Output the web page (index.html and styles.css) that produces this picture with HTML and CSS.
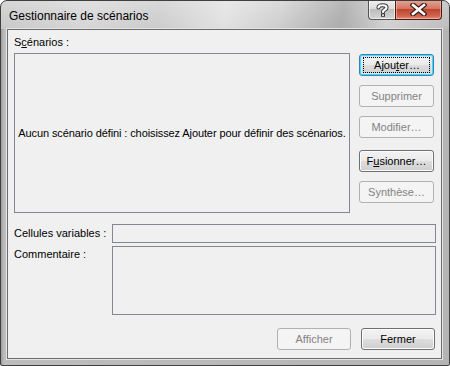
FILE: index.html
```html
<!DOCTYPE html>
<html lang="fr">
<head>
<meta charset="utf-8">
<title>Gestionnaire de scénarios</title>
<link rel="stylesheet" href="styles.css">
</head>
<body>
<div class="window">
  <div class="titlebar">
    <span class="title">Gestionnaire de scénarios</span>
    <div class="caption-btns">
      <div class="cb help">
        <svg width="13" height="14" viewBox="0 0 13 14">
          <path d="M2.5 4.5 C2.5 1.5 10.5 1.5 10.5 4.5 C10.5 7 7 6.5 7 9" fill="none" stroke="#3a3a3a" stroke-width="4.2" stroke-linecap="round"/>
          <rect x="5" y="10.4" width="4" height="3.4" fill="#3a3a3a"/>
          <path d="M2.5 4.5 C2.5 1.5 10.5 1.5 10.5 4.5 C10.5 7 7 6.5 7 9" fill="none" stroke="#ffffff" stroke-width="2.2" stroke-linecap="round"/>
          <rect x="6" y="11.4" width="2" height="1.4" fill="#ffffff"/>
        </svg>
      </div>
      <div class="cb close">
        <svg width="17" height="13" viewBox="0 0 17 13">
          <path d="M3 2 L14 11 M14 2 L3 11" fill="none" stroke="#3a1f1a" stroke-width="5" stroke-linecap="square"/>
          <path d="M3 2 L14 11 M14 2 L3 11" fill="none" stroke="#ffffff" stroke-width="2.6" stroke-linecap="square"/>
        </svg>
      </div>
    </div>
  </div>
  <div class="client">
    <div class="group-label">S<u>c</u>énarios :</div>
    <div class="top-row">
      <div class="listbox">Aucun scénario défini : choisissez Ajouter pour définir des scénarios.</div>
      <div class="btn-col">
        <div class="btn default"><span class="focus">Ajou<u>t</u>er…</span></div>
        <div class="btn disabled">Supprimer</div>
        <div class="btn disabled">Modifier…</div>
        <div class="btn gap">F<u>u</u>sionner…</div>
        <div class="btn disabled">Synthèse…</div>
      </div>
    </div>
    <div class="field-row">
      <div class="field-label">Cellules variables :</div>
      <div class="input"></div>
    </div>
    <div class="field-row comment">
      <div class="field-label">Commentaire :</div>
      <div class="textarea"></div>
    </div>
    <div class="footer">
      <div class="btn disabled">Afficher</div>
      <div class="btn">Fermer</div>
    </div>
  </div>
</div>
</body>
</html>
```

FILE: styles.css
```css
* { box-sizing: border-box; }
html, body { margin: 0; padding: 0; background: #ffffff; }
body {
  font-family: "Liberation Sans", Arial, sans-serif;
  font-size: 11px;
  color: #000;
}
.window {
  width: 450px;
  height: 366px;
  border: 1px solid #3f3f3f;
  border-radius: 7px 7px 2px 2px;
  background: linear-gradient(to right, #9c9c9c 0px, #bdbdbd 3px, #b4b4b4 100%);
  padding: 0 7px 6px 6px;
  display: flex;
  flex-direction: column;
  overflow: hidden;
}
.titlebar {
  height: 28px;
  margin: 0 -7px 0 -6px;
  padding: 0 7px 0 8px;
  display: flex;
  justify-content: space-between;
  align-items: flex-start;
  background:
    linear-gradient(100deg, rgba(255,255,255,0) 0%, rgba(255,255,255,0.25) 20%, rgba(255,255,255,0.05) 35%, rgba(255,255,255,0.45) 50%, rgba(255,255,255,0.1) 62%, rgba(0,0,0,0.14) 76%, rgba(255,255,255,0.15) 86%, rgba(0,0,0,0.06) 100%),
    linear-gradient(to bottom, #d6d6d6, #c8c8c8);
  border-radius: 6px 6px 0 0;
}
.title {
  font-size: 12px;
  line-height: 14px;
  margin-top: 8px;
  color: #000;
}
.caption-btns {
  display: flex;
  margin-top: -1px;
}
.cb {
  height: 20px;
  display: flex;
  align-items: center;
  justify-content: center;
  border: 1px solid #555;
  border-top: none;
}
.help {
  width: 27px;
  border-radius: 0 0 0 4px;
  border-right: none;
  background: linear-gradient(to bottom, #f0f0f0 0%, #dcdcdc 45%, #bdbdbd 50%, #d4d4d4 100%);
  box-shadow: inset 0 0 0 1px rgba(255,255,255,0.6);
}
.close {
  width: 47px;
  border-radius: 0 0 4px 0;
  border-color: #4a1a12;
  background: linear-gradient(to bottom, #e6a595 0%, #d37763 45%, #c0452f 50%, #d0654f 85%, #e1937f 100%);
  box-shadow: inset 0 0 0 1px rgba(255,210,200,0.5);
}
.client {
  width: 435px;
  height: 330px;
  border: 1px solid #6c6c6c;
  outline: 1px solid #e4e4e4;
  background: #f0f0f0;
  padding: 6px 5px 0 6px;
  display: flex;
  flex-direction: column;
}
.group-label {
  line-height: 13px;
  height: 13px;
}
u { text-decoration: underline; text-underline-offset: 1px; }
.top-row {
  display: flex;
  margin-top: 4px;
  height: 160px;
}
.listbox {
  width: 336px;
  height: 160px;
  border: 1px solid #828790;
  background: #f0f0f0;
  display: flex;
  align-items: center;
  justify-content: center;
  letter-spacing: -0.1px;
  white-space: nowrap;
}
.btn-col {
  margin-left: 9px;
  padding-top: 1px;
  display: flex;
  flex-direction: column;
  gap: 9px;
}
.btn {
  width: 75px;
  height: 22px;
  border: 1px solid #707070;
  border-radius: 3px;
  background: linear-gradient(to bottom, #f2f2f2 0%, #ebebeb 48%, #dddddd 52%, #cfcfcf 100%);
  box-shadow: inset 0 0 0 1px #fcfcfc;
  display: flex;
  align-items: center;
  justify-content: center;
  line-height: 13px;
  color: #000;
}
.btn.disabled {
  border-color: #adb2b5;
  background: #f4f4f4;
  box-shadow: none;
  color: #838383;
}
.btn.default {
  border-color: #3c7fb1;
  box-shadow: inset 0 0 0 1px #48d7fb, inset 0 0 0 2px #c4ecfa;
  background: linear-gradient(to bottom, #f2f2f2 0%, #ebebeb 48%, #dddddd 52%, #cfcfcf 100%);
}
.focus {
  border: 1px dotted #000;
  padding: 1px 3px 1px 4px;
  width: 67px;
  height: 16px;
  display: flex;
  align-items: center;
  justify-content: center;
}
.btn.gap { margin-top: 3px; }
.field-row {
  display: flex;
  margin-top: 11px;
  align-items: center;
}
.field-row.comment {
  margin-top: 3px;
  align-items: flex-start;
}
.field-label {
  width: 98px;
  line-height: 13px;
}
.comment .field-label { margin-top: 2px; }
.input {
  width: 325px;
  height: 19px;
  border: 1px solid #828790;
  background: #f0f0f0;
}
.textarea {
  width: 325px;
  height: 69px;
  border: 1px solid #828790;
  background: #f0f0f0;
}
.footer {
  display: flex;
  justify-content: flex-end;
  gap: 10px;
  margin-top: 13px;
  padding-right: 1px;
}
.footer .btn { width: 74px; }
```
